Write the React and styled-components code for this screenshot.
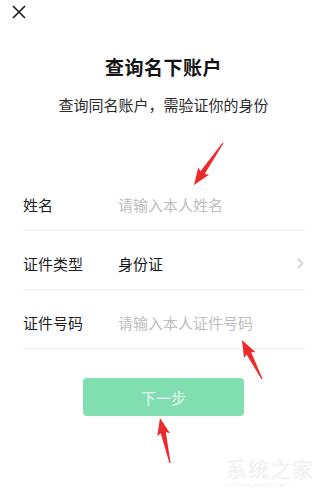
import React from "react";
import styled, { createGlobalStyle } from "styled-components";

//------------------------------------------------------------//

const fields = [
  { label: "姓名", placeholder: "请输入本人姓名" },
  { label: "证件类型", value: "身份证", arrow: true },
  { label: "证件号码", placeholder: "请输入本人证件号码" },
];

// annotation arrows drawn on top of the screenshot: [tail, tip]
const arrows = [
  [[223, 143], [194, 185]],
  [[262, 379], [242, 340]],
  [[170, 463], [160, 418]],
];

const arrowPoints = ([tx, ty], [hx, hy]) => {
  const dx = hx - tx;
  const dy = hy - ty;
  const len = Math.hypot(dx, dy);
  const ux = dx / len;
  const uy = dy / len;
  const nx = -uy;
  const ny = ux;
  const headLen = 15;
  const bx = hx - ux * headLen;
  const by = hy - uy * headLen;
  const pt = (x, y) => `${x.toFixed(1)},${y.toFixed(1)}`;
  return [
    pt(tx + nx * 0.6, ty + ny * 0.6),
    pt(bx + nx * 2.6, by + ny * 2.6),
    pt(bx + nx * 6.5 - ux * 2, by + ny * 6.5 - uy * 2),
    pt(hx, hy),
    pt(bx - nx * 6.5 - ux * 2, by - ny * 6.5 - uy * 2),
    pt(bx - nx * 2.6, by - ny * 2.6),
    pt(tx - nx * 0.6, ty - ny * 0.6),
  ].join(" ");
};

const App = () => {
  return (
    <>
      <GlobalStyle />
      <PAGE>
        <TOPBAR>
          <CLOSE width="14" height="14" viewBox="0 0 14 14">
            <path d="M1 1 L13 13 M13 1 L1 13" stroke="#1a1a1a" strokeWidth="1.6" fill="none" />
          </CLOSE>
        </TOPBAR>

        <TITLE>查询名下账户</TITLE>
        <SUBTITLE>查询同名账户，需验证你的身份</SUBTITLE>

        <FORM>
          {fields.map((f) => (
            <ROW key={f.label}>
              <LABEL>{f.label}</LABEL>
              {f.value ? (
                <VALUE>{f.value}</VALUE>
              ) : (
                <INPUT placeholder={f.placeholder} />
              )}
              {f.arrow && (
                <CHEVRON width="7" height="11" viewBox="0 0 7 11">
                  <path d="M1 1 L5.5 5.5 L1 10" stroke="#c4c4c4" strokeWidth="1.4" fill="none" />
                </CHEVRON>
              )}
            </ROW>
          ))}
        </FORM>

        <BUTTON>下一步</BUTTON>

        <WATERMARK>
          <MARKTEXT>系统之家</MARKTEXT>
          <MARKSMALL>XITONGZHIJIA.NET</MARKSMALL>
        </WATERMARK>

        <OVERLAY width="327" height="502" viewBox="0 0 327 502">
          {arrows.map(([tail, tip], i) => (
            <polygon key={i} points={arrowPoints(tail, tip)} fill="#ec2a2e" />
          ))}
        </OVERLAY>
      </PAGE>
    </>
  );
};

/*-----------------------*\
            CSS
\*-----------------------*/

const GlobalStyle = createGlobalStyle`
  html, body {
    margin: 0;
    padding: 0;
    background: #ffffff;
  }
  body {
    font-family: "Noto Sans CJK SC", "Noto Sans", sans-serif;
  }
`;

const PAGE = styled.div`
  position: relative;
  width: 327px;
  height: 502px;
  overflow: hidden;
  background: #fff;
  display: flex;
  flex-direction: column;
`;

const TOPBAR = styled.div`
  height: 25px;
  display: flex;
  align-items: flex-start;
  padding: 5px 0 0 12px;
  box-sizing: border-box;
`;

const CLOSE = styled.svg`
  display: block;
`;

const TITLE = styled.h1`
  margin: 28px 0 0;
  font-size: 19px;
  line-height: 28px;
  font-weight: 700;
  color: #141414;
  text-align: center;
  letter-spacing: 0.5px;
`;

const SUBTITLE = styled.p`
  margin: 13px 0 0;
  font-size: 15px;
  line-height: 22px;
  color: #2a2a2a;
  text-align: center;
`;

const FORM = styled.div`
  margin: 56px 22px 0 23px;
  display: flex;
  flex-direction: column;
`;

const ROW = styled.div`
  height: 59px;
  padding-top: 7px;
  box-sizing: border-box;
  display: flex;
  align-items: center;
  border-bottom: 1px solid #ededed;
`;

const LABEL = styled.span`
  width: 95px;
  flex-shrink: 0;
  font-size: 15px;
  color: #1e1e1e;
`;

const VALUE = styled.span`
  flex: 1;
  font-size: 15px;
  color: #141414;
`;

const INPUT = styled.input`
  flex: 1;
  min-width: 0;
  border: none;
  outline: none;
  padding: 0;
  background: transparent;
  font-family: inherit;
  font-size: 15px;
  color: #1e1e1e;

  &::placeholder {
    color: #bdbdbd;
  }
`;

const CHEVRON = styled.svg`
  display: block;
  margin-right: 1px;
`;

const BUTTON = styled.button`
  margin: 29px 0 0 83px;
  width: 161px;
  height: 38px;
  border: none;
  border-radius: 4px;
  background: #80deb1;
  color: #e9f8f0;
  font-family: inherit;
  font-size: 15px;
  padding: 0;
`;

const WATERMARK = styled.div`
  position: absolute;
  left: 226px;
  top: 455px;
  display: flex;
  flex-direction: column;
  align-items: flex-start;
  pointer-events: none;
`;

const MARKTEXT = styled.span`
  font-size: 21px;
  line-height: 26px;
  font-weight: 700;
  color: #f3f3f3;
  letter-spacing: 1px;
`;

const MARKSMALL = styled.span`
  font-family: "Liberation Sans", sans-serif;
  font-size: 6px;
  line-height: 8px;
  color: #f2f2f2;
  letter-spacing: 0.6px;
`;

const OVERLAY = styled.svg`
  position: absolute;
  left: 0;
  top: 0;
  pointer-events: none;
`;

export default App;
